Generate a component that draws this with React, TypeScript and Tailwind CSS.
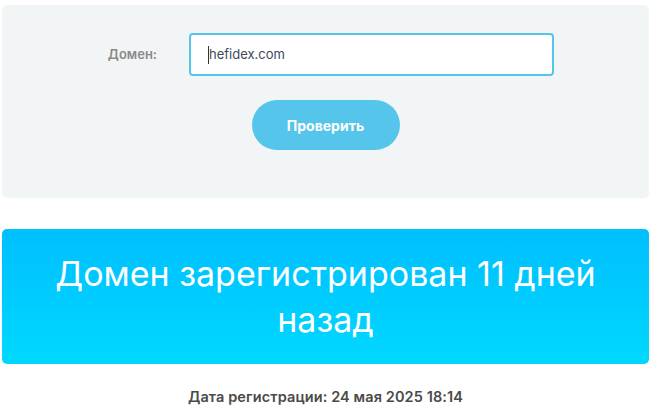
export default function App() {
  return (
    <div className="min-h-screen bg-white pt-[5px] pl-[2px]" style={{ fontFamily: 'Inter, "Open Sans", sans-serif' }}>
      <div className="w-[647px]">
        {/* форма проверки */}
        <div className="rounded-[5px] bg-[#f2f5f6] pt-[28px] pb-[48px]">
          <div className="flex items-center">
            <label className="w-[155px] text-right text-[13px] font-semibold text-[#8a8a8a]">Домен:</label>
            <div className="ml-[32px] flex h-[43px] w-[365px] items-center rounded-[4px] border-2 border-[#56c5ec] bg-white pl-[17px]">
              <span className="h-[18px] w-px bg-[#333]" />
              <span className="text-[13px] text-[#3d4a5a]">hefidex.com</span>
            </div>
          </div>
          <div className="mt-[24px] flex justify-center">
            <button className="h-[50px] w-[148px] rounded-full bg-[#56c5ec] text-[14px] font-bold text-white">
              Проверить
            </button>
          </div>
        </div>

        {/* результат */}
        <div className="mt-[31px] flex h-[135px] items-center justify-center rounded-[5px] bg-gradient-to-b from-[#00bfff] to-[#00d8ff] px-10">
          <p className="text-center text-[34px] leading-[46px] font-normal text-white">
            Домен зарегистрирован 11 дней назад
          </p>
        </div>

        <p className="mt-[22px] text-center text-[14.5px] font-semibold tracking-[0.1px] text-[#4a4a4a]">
          Дата регистрации: 24 мая 2025 18:14
        </p>
      </div>
    </div>
  );
}
